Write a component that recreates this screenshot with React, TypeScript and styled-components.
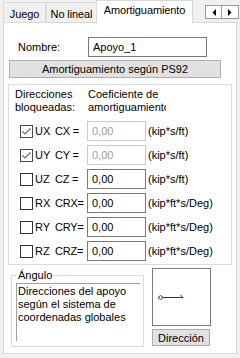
import React from "react";
import styled, { createGlobalStyle, css } from "styled-components";

const Global = createGlobalStyle`
  html, body {
    margin: 0;
    padding: 0;
    background: #f0f0f0;
  }
  body {
    font-family: "Liberation Sans", Arial, sans-serif;
    font-size: 11px;
    color: #000;
  }
`;

const Window = styled.div`
  width: 240px;
  height: 358px;
  box-sizing: border-box;
  padding: 0 3px 4px 3px;
  display: flex;
  flex-direction: column;
`;

const TabStrip = styled.div`
  height: 22px;
  display: flex;
  align-items: flex-end;
`;

const Tab = styled.div<{ $w: number; $active?: boolean }>`
  width: ${(p) => p.$w}px;
  height: 20px;
  box-sizing: border-box;
  border: 1px solid #d9d9d9;
  border-bottom: none;
  background: #f0f0f0;
  display: flex;
  align-items: center;
  justify-content: center;
  padding-top: 2px;
  white-space: nowrap;
  letter-spacing: -0.1px;

  ${(p) =>
    p.$active &&
    css`
      height: 23px;
      margin: 0 -1px -1px -1px;
      background: #fff;
      align-items: flex-start;
      padding-top: 3px;
      position: relative;
      z-index: 1;
    `}
`;

const Scroller = styled.div`
  margin-left: auto;
  margin-right: -2px;
  align-self: flex-start;
  margin-top: 5px;
  display: flex;
`;

const ScrollButton = styled.div`
  width: 17px;
  height: 14px;
  box-sizing: border-box;
  border: 1px solid #9a9a9a;
  background: #fdfdfd;
  display: flex;
  align-items: center;
  justify-content: center;
  & + & {
    border-left: none;
  }
`;

const Panel = styled.div`
  flex: 1;
  background: #fff;
  border: 1px solid #d9d9d9;
  display: flex;
  flex-direction: column;
`;

const NameRow = styled.div`
  display: flex;
  align-items: center;
  margin-top: 14px;
  padding-left: 14px;
`;

const NameLabel = styled.span`
  width: 70px;
`;

const TextBox = styled.div<{ $w: number; $disabled?: boolean }>`
  width: ${(p) => p.$w}px;
  height: 20px;
  box-sizing: border-box;
  border: 1px solid ${(p) => (p.$disabled ? "#cccccc" : "#7a7a7a")};
  color: ${(p) => (p.$disabled ? "#9d9d9d" : "#000")};
  background: #fff;
  display: flex;
  align-items: center;
  padding-left: 4px;
`;

const PushButton = styled.div<{ $w: number }>`
  width: ${(p) => p.$w}px;
  height: 18px;
  box-sizing: border-box;
  border: 1px solid #adadad;
  background: #e1e1e1;
  display: flex;
  align-items: center;
  justify-content: center;
`;

const PsButton = styled(PushButton)`
  margin: 3px 0 0 5px;
`;

const Group = styled.div`
  margin: 6px 0 0 4px;
  width: 224px;
  height: 181px;
  box-sizing: border-box;
  border: 1px solid #dcdcdc;
  padding: 3px 0 0 6px;
`;

const Header = styled.div`
  display: flex;
  line-height: 13px;
`;

const HeaderCol = styled.div<{ $w: number }>`
  width: ${(p) => p.$w}px;
  overflow: hidden;
  white-space: nowrap;
`;

const Rows = styled.div`
  margin-top: 7px;
  display: flex;
  flex-direction: column;
  gap: 4px;
  padding-left: 5px;
`;

const Row = styled.div`
  display: grid;
  grid-template-columns: 13px 22px 32px 59px auto;
  align-items: center;
  height: 20px;
`;

const Box = styled.span<{ $checked?: boolean }>`
  width: 13px;
  height: 13px;
  box-sizing: border-box;
  border: 1px solid ${(p) => (p.$checked ? "#4a4a4a" : "#333")};
  background: #fff;
  display: flex;
`;

const Axis = styled.span`
  padding-left: 2px;
`;

const Coef = styled.span`
  white-space: nowrap;
  letter-spacing: -0.2px;
`;

const Unit = styled.span`
  padding-left: 2px;
  white-space: nowrap;
`;

const Bottom = styled.div`
  display: flex;
  align-items: flex-start;
  margin: 4px 0 0 7px;
`;

const Frame = styled.fieldset`
  margin: 0;
  width: 133px;
  height: 78px;
  box-sizing: border-box;
  border: 1px solid #dcdcdc;
  padding: 0 4px 4px 4px;
  min-width: 0;
`;

const FrameTitle = styled.legend`
  padding: 0 1px;
  margin-left: 1px;
  line-height: 13px;
`;

const Memo = styled.div`
  margin-top: 1px;
  width: 124px;
  height: 58px;
  box-sizing: border-box;
  border-top: 1px solid #a0a0a0;
  border-left: 1px solid #a0a0a0;
  padding: 1px 0 0 1px;
  line-height: 13px;
  white-space: pre-line;
`;

const DirCol = styled.div`
  margin: -1px 0 0 8px;
  display: flex;
  flex-direction: column;
  gap: 3px;
`;

const Picture = styled.div`
  width: 59px;
  height: 58px;
  box-sizing: border-box;
  border: 1px solid #7a7a7a;
  background: #fff;
`;

const DirButton = styled(PushButton)`
  height: 17px;
`;

const Check = ({ checked }: { checked?: boolean }) => (
  <Box $checked={checked}>
    {checked && (
      <svg width="11" height="11" viewBox="0 0 11 11">
        <polyline
          points="1.5,5.5 4,8 9.5,2.5"
          fill="none"
          stroke="#6b6b6b"
          strokeWidth="1.2"
        />
      </svg>
    )}
  </Box>
);

const rows = [
  { axis: "UX", coef: "CX =", unit: "(kip*s/ft)", checked: true },
  { axis: "UY", coef: "CY =", unit: "(kip*s/ft)", checked: true },
  { axis: "UZ", coef: "CZ =", unit: "(kip*s/ft)", checked: false },
  { axis: "RX", coef: "CRX=", unit: "(kip*ft*s/Deg)", checked: false },
  { axis: "RY", coef: "CRY=", unit: "(kip*ft*s/Deg)", checked: false },
  { axis: "RZ", coef: "CRZ=", unit: "(kip*ft*s/Deg)", checked: false },
];

export default function App() {
  return (
    <>
      <Global />
      <Window>
        <TabStrip>
          <Tab $w={43}>Juego</Tab>
          <Tab $w={51}>No lineal</Tab>
          <Tab $w={97} $active>
            Amortiguamiento
          </Tab>
          <Scroller>
            <ScrollButton>
              <svg width="4" height="7" viewBox="0 0 4 7">
                <polygon points="4,0 4,7 0.5,3.5" fill="#000" />
              </svg>
            </ScrollButton>
            <ScrollButton>
              <svg width="4" height="7" viewBox="0 0 4 7">
                <polygon points="0,0 0,7 3.5,3.5" fill="#000" />
              </svg>
            </ScrollButton>
          </Scroller>
        </TabStrip>

        <Panel>
          <NameRow>
            <NameLabel>Nombre:</NameLabel>
            <TextBox $w={119}>Apoyo_1</TextBox>
          </NameRow>

          <PsButton $w={212}>Amortiguamiento según PS92</PsButton>

          <Group>
            <Header>
              <HeaderCol $w={73}>
                Direcciones
                <br />
                bloqueadas:
              </HeaderCol>
              <HeaderCol $w={78}>
                Coeficiente de
                <br />
                amortiguamiento
              </HeaderCol>
            </Header>
            <Rows>
              {rows.map((r) => (
                <Row key={r.axis}>
                  <Check checked={r.checked} />
                  <Axis>{r.axis}</Axis>
                  <Coef>{r.coef}</Coef>
                  <TextBox $w={59} $disabled={r.checked}>
                    0,00
                  </TextBox>
                  <Unit>{r.unit}</Unit>
                </Row>
              ))}
            </Rows>
          </Group>

          <Bottom>
            <Frame>
              <FrameTitle>Ángulo</FrameTitle>
              <Memo>
                {"Direcciones del apoyo\nsegún el sistema de\ncoordenadas globales"}
              </Memo>
            </Frame>
            <DirCol>
              <Picture>
                <svg width="57" height="56" viewBox="0 0 57 56">
                  <polygon
                    points="5,28.5 7.5,26.5 10,28.5 7.5,30.5"
                    fill="#fff"
                    stroke="#1f3864"
                    strokeWidth="1"
                  />
                  <line x1="10" y1="28.5" x2="30" y2="28.5" stroke="#1f3864" strokeWidth="1" />
                  <line x1="30" y1="28.5" x2="27.5" y2="26" stroke="#1f3864" strokeWidth="1" />
                </svg>
              </Picture>
              <DirButton $w={58}>Dirección</DirButton>
            </DirCol>
          </Bottom>
        </Panel>
      </Window>
    </>
  );
}
